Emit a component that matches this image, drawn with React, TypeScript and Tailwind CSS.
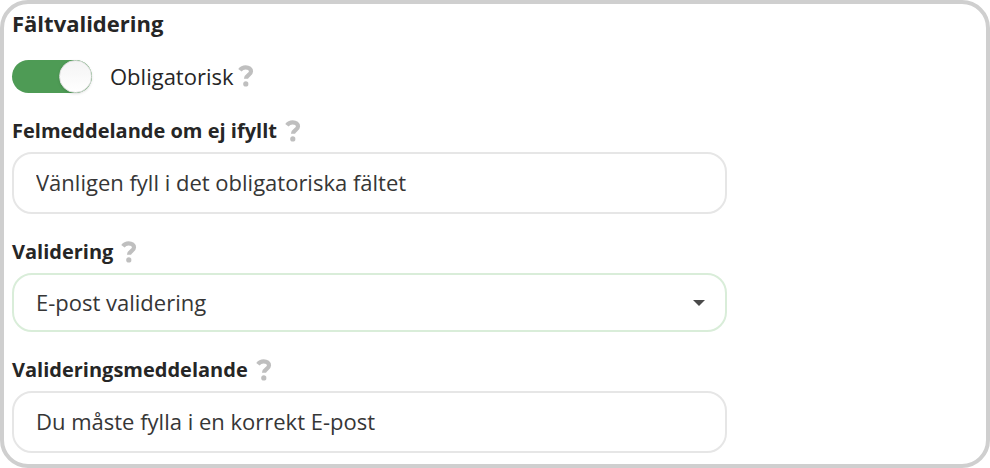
import { useState } from "react";
import type { ReactNode } from "react";

const fieldClass =
  "block w-full rounded-[20px] border-2 bg-white px-[22px] pb-[2px] text-[22px] leading-[30px] text-[#363636] outline-none";

function HelpIcon() {
  return (
    <svg viewBox="0 0 16 22" className="h-[22px] w-4 shrink-0 text-[#bfbfbf]" fill="none" aria-hidden="true">
      <path
        d="M1.9 5.3C3.5 3.2 5.3 2.4 7.6 2.4c3.3 0 5.4 1.6 5.4 4.1 0 3.5-5 3.5-5 7.3"
        stroke="currentColor"
        strokeWidth="4.2"
      />
      <circle cx="7.8" cy="18.9" r="2.6" fill="currentColor" />
    </svg>
  );
}

function Field({ id, label, children }: { id: string; label: string; children: ReactNode }) {
  return (
    <div className="mt-6">
      <div className="mb-[7px] flex items-center gap-2">
        <label htmlFor={id} className="text-xl leading-7 font-bold">
          {label}
        </label>
        <HelpIcon />
      </div>
      {children}
    </div>
  );
}

export default function App() {
  const [required, setRequired] = useState(true);
  const [emptyMessage, setEmptyMessage] = useState("Vänligen fyll i det obligatoriska fältet");
  const [invalidMessage, setInvalidMessage] = useState("Du måste fylla i en korrekt E-post");

  return (
    <section className="rounded-[28px] border-4 border-[#cfcfcf] bg-white px-2 pt-[3px] pb-[11px] font-['Open_Sans','Noto_Sans',sans-serif] text-[#262626]">
      <form className="max-w-[715px]">
        <h2 className="text-[22px] leading-8 font-bold">Fältvalidering</h2>

        {/* Required toggle */}
        <div className="mt-5 flex h-[34px] items-center gap-1">
          <label className="flex cursor-pointer items-center gap-[18px]">
            <input
              type="checkbox"
              className="peer sr-only"
              checked={required}
              onChange={(e) => setRequired(e.target.checked)}
            />
            <span className="flex h-[33px] w-20 items-center rounded-full bg-gray-300 peer-checked:justify-end peer-checked:bg-[#4e9b55]">
              <span className="size-[33px] rounded-full border border-[#dedede] bg-linear-to-b from-[#f4f4f4] to-white shadow-sm" />
            </span>
            <span className="text-[22px] leading-[30px]">Obligatorisk</span>
          </label>
          <HelpIcon />
        </div>

        <Field id="empty-message" label="Felmeddelande om ej ifyllt">
          <input
            id="empty-message"
            type="text"
            className={`${fieldClass} h-[62px] border-[#e6e6e6]`}
            value={emptyMessage}
            onChange={(e) => setEmptyMessage(e.target.value)}
          />
        </Field>

        <Field id="validation" label="Validering">
          <div className="grid items-center">
            <select
              id="validation"
              className={`${fieldClass} col-start-1 row-start-1 h-[59px] appearance-none border-[#d9edd9]`}
            >
              <option>E-post validering</option>
            </select>
            <svg
              viewBox="0 0 12 6"
              className="pointer-events-none col-start-1 row-start-1 mr-[22px] h-[6px] w-3 justify-self-end fill-[#4a4a4a]"
              aria-hidden="true"
            >
              <path d="M0 0h12L6 6z" />
            </svg>
          </div>
        </Field>

        <Field id="invalid-message" label="Valideringsmeddelande">
          <input
            id="invalid-message"
            type="text"
            className={`${fieldClass} h-[62px] border-[#e6e6e6]`}
            value={invalidMessage}
            onChange={(e) => setInvalidMessage(e.target.value)}
          />
        </Field>
      </form>
    </section>
  );
}
